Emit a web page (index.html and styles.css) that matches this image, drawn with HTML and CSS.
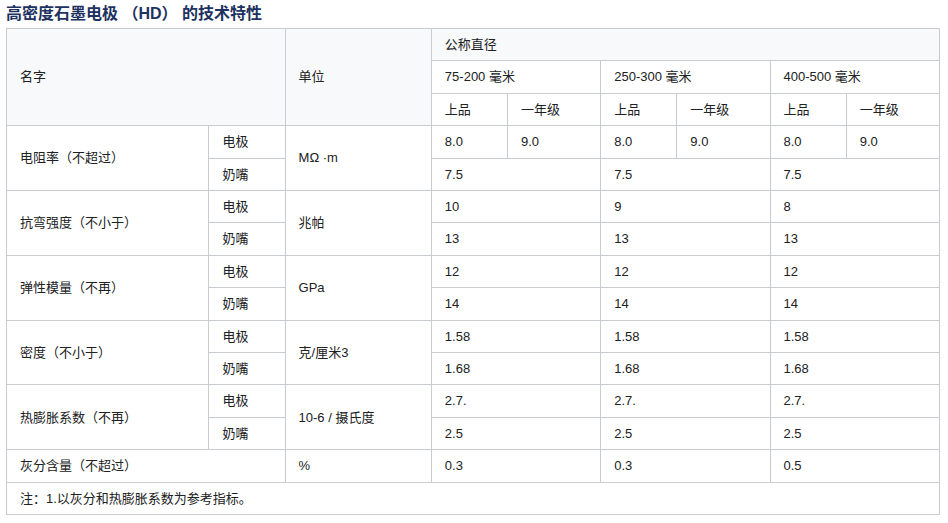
FILE: index.html
```html
<!DOCTYPE html>
<html lang="zh">
<head>
<meta charset="utf-8">
<title>高密度石墨电极 （HD） 的技术特性</title>
<link rel="stylesheet" href="styles.css">
</head>
<body>
<div class="page">
  <h2 class="title">高密度石墨电极 （HD） 的技术特性</h2>
  <table class="spec">
    <colgroup>
      <col class="c-name"><col class="c-sub"><col class="c-unit">
      <col class="c-a"><col class="c-b"><col class="c-a"><col class="c-b"><col class="c-a"><col class="c-b">
    </colgroup>
    <tr>
      <th class="hd" colspan="2" rowspan="3">名字</th>
      <th class="hd" rowspan="3">单位</th>
      <th class="hd" colspan="6">公称直径</th>
    </tr>
    <tr>
      <td colspan="2">75-200 毫米</td>
      <td colspan="2">250-300 毫米</td>
      <td colspan="2">400-500 毫米</td>
    </tr>
    <tr>
      <td>上品</td><td>一年级</td><td>上品</td><td>一年级</td><td>上品</td><td>一年级</td>
    </tr>
    <tr>
      <td rowspan="2">电阻率（不超过）</td><td>电极</td><td rowspan="2">MΩ ·m</td>
      <td>8.0</td><td>9.0</td><td>8.0</td><td>9.0</td><td>8.0</td><td>9.0</td>
    </tr>
    <tr>
      <td>奶嘴</td><td colspan="2">7.5</td><td colspan="2">7.5</td><td colspan="2">7.5</td>
    </tr>
    <tr>
      <td rowspan="2">抗弯强度（不小于）</td><td>电极</td><td rowspan="2">兆帕</td>
      <td colspan="2">10</td><td colspan="2">9</td><td colspan="2">8</td>
    </tr>
    <tr>
      <td>奶嘴</td><td colspan="2">13</td><td colspan="2">13</td><td colspan="2">13</td>
    </tr>
    <tr>
      <td rowspan="2">弹性模量（不再）</td><td>电极</td><td rowspan="2">GPa</td>
      <td colspan="2">12</td><td colspan="2">12</td><td colspan="2">12</td>
    </tr>
    <tr>
      <td>奶嘴</td><td colspan="2">14</td><td colspan="2">14</td><td colspan="2">14</td>
    </tr>
    <tr>
      <td rowspan="2">密度（不小于）</td><td>电极</td><td rowspan="2">克/厘米3</td>
      <td colspan="2">1.58</td><td colspan="2">1.58</td><td colspan="2">1.58</td>
    </tr>
    <tr>
      <td>奶嘴</td><td colspan="2">1.68</td><td colspan="2">1.68</td><td colspan="2">1.68</td>
    </tr>
    <tr>
      <td rowspan="2">热膨胀系数（不再）</td><td>电极</td><td rowspan="2">10-6 / 摄氏度</td>
      <td colspan="2">2.7.</td><td colspan="2">2.7.</td><td colspan="2">2.7.</td>
    </tr>
    <tr>
      <td>奶嘴</td><td colspan="2">2.5</td><td colspan="2">2.5</td><td colspan="2">2.5</td>
    </tr>
    <tr>
      <td colspan="2">灰分含量（不超过）</td><td>%</td>
      <td colspan="2">0.3</td><td colspan="2">0.3</td><td colspan="2">0.5</td>
    </tr>
    <tr>
      <td colspan="9">注：1.以灰分和热膨胀系数为参考指标。</td>
    </tr>
  </table>
</div>
</body>
</html>
```

FILE: styles.css
```css
html, body {
  margin: 0;
  padding: 0;
  background: #ffffff;
}

.page {
  padding: 0 6px;
  font-family: "Liberation Sans", "Noto Sans CJK SC", sans-serif;
  color: #202122;
}

.title {
  margin: 0;
  height: 28px;
  line-height: 28px;
  font-size: 16px;
  font-weight: bold;
  color: #1d3261;
  white-space: nowrap;
}

.spec {
  border-collapse: collapse;
  table-layout: fixed;
  width: 934px;
  font-size: 13px;
  background: #ffffff;
  border: 1px solid #c8ccd1;
}

.c-name { width: 202px; }
.c-sub { width: 76px; }
.c-unit { width: 146px; }
.c-a { width: 76px; }
.c-b { width: 93px; }

.spec th,
.spec td {
  border: 1px solid #c8ccd1;
  padding: 5px 13px;
  line-height: 21.4px;
  text-align: left;
  vertical-align: middle;
  font-weight: normal;
  white-space: nowrap;
}

.spec th.hd {
  background: #f8f9fa;
}
```
